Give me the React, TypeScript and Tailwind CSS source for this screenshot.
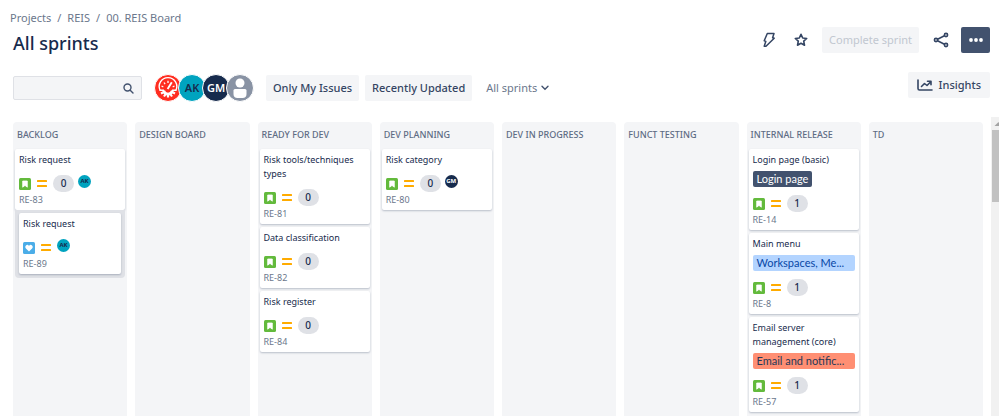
import { useState } from 'react';
import type { ReactNode } from 'react';

type Issue = {
  id: string;
  title: string;
  type: 'story' | 'wish';
  points?: number;
  assignee?: string;
  epic?: { name: string; color: string };
  nested?: boolean;
};

const NAVY = 'bg-[#42526e] text-white';
const BLUE = 'bg-[#b3d4ff] text-[#0747a6]';
const CORAL = 'bg-[#ff8f73] text-[#253858]';

const AVATAR: Record<string, string> = {
  AK: 'bg-[#00a3bf] text-[#172b4d]',
  GM: 'bg-[#172b4d] text-white',
};

const COLUMNS: { name: string; issues: Issue[] }[] = [
  {
    name: 'BACKLOG',
    issues: [
      { id: 'RE-83', title: 'Risk request', type: 'story', points: 0, assignee: 'AK' },
      { id: 'RE-89', title: 'Risk request', type: 'wish', assignee: 'AK', nested: true },
    ],
  },
  { name: 'DESIGN BOARD', issues: [] },
  {
    name: 'READY FOR DEV',
    issues: [
      { id: 'RE-81', title: 'Risk tools/techniques types', type: 'story', points: 0 },
      { id: 'RE-82', title: 'Data classification', type: 'story', points: 0 },
      { id: 'RE-84', title: 'Risk register', type: 'story', points: 0 },
    ],
  },
  { name: 'DEV PLANNING', issues: [{ id: 'RE-80', title: 'Risk category', type: 'story', points: 0, assignee: 'GM' }] },
  { name: 'DEV IN PROGRESS', issues: [] },
  { name: 'FUNCT TESTING', issues: [] },
  {
    name: 'INTERNAL RELEASE',
    issues: [
      { id: 'RE-14', title: 'Login page (basic)', type: 'story', points: 1, epic: { name: 'Login page', color: NAVY } },
      { id: 'RE-8', title: 'Main menu', type: 'story', points: 1, epic: { name: 'Workspaces, Me...', color: BLUE } },
      {
        id: 'RE-57',
        title: 'Email server management (core)',
        type: 'story',
        points: 1,
        epic: { name: 'Email and notific...', color: CORAL },
      },
    ],
  },
  { name: 'TD', issues: [] },
];

function TypeIcon({ type }: { type: Issue['type'] }) {
  return (
    <svg viewBox="0 0 12 12" className="size-3 shrink-0">
      <rect width="12" height="12" rx="1.5" fill={type === 'story' ? '#63ba3c' : '#4bade8'} />
      {type === 'story' ? (
        <path d="M3.7 3h4.6v6.200L6 7.400 3.700 9.200z" fill="#fff" stroke="#fff" strokeWidth="0.8" strokeLinejoin="round" />
      ) : (
        <path d="M6 9.600 2.900 6.500a2 2 0 0 1 0-2.900 2 2 0 0 1 3.100.4 2 2 0 0 1 3.100-.4 2 2 0 0 1 0 2.900z" fill="#fff" />
      )}
    </svg>
  );
}

function PriorityIcon() {
  return (
    <svg viewBox="0 0 10 12" className="mx-[2px] h-3 w-[10px] shrink-0" fill="#ffab00">
      <rect y="2" width="10" height="2" rx="0.5" />
      <rect y="7" width="10" height="2" rx="0.5" />
    </svg>
  );
}

function Card({ issue }: { issue: Issue }) {
  return (
    <article className="rounded-xs bg-white px-1 pt-1 pb-[3px] shadow-[0_1px_2px_rgba(9,30,66,0.25)]">
      <h3 className="text-[9px] leading-[14px] text-[#172b4d]">{issue.title}</h3>
      {issue.epic && (
        <div className="mt-1 flex">
          <span
            className={`rounded-xs px-1 font-['Lato','Noto_Sans',sans-serif] text-[11px] leading-4 whitespace-nowrap ${
              issue.epic.name.endsWith('...') ? 'w-full' : ''
            } ${issue.epic.color}`}
          >
            {issue.epic.name}
          </span>
        </div>
      )}
      <div className="mt-2 flex h-[17px] items-center gap-1">
        <TypeIcon type={issue.type} />
        <PriorityIcon />
        {issue.points !== undefined && (
          <span className="w-[21px] rounded-full bg-[#dfe1e6] text-center text-[10px] leading-[17px] font-medium text-[#172b4d]">
            {issue.points}
          </span>
        )}
        {issue.assignee && (
          <span
            className={`mb-1 size-[13px] rounded-full text-center text-[6px] leading-[13px] font-bold ${AVATAR[issue.assignee]}`}
          >
            {issue.assignee}
          </span>
        )}
      </div>
      <a href="#" className="mt-px block text-[9px] leading-[14px] text-[#6b778c]">
        {issue.id}
      </a>
    </article>
  );
}

function Column({ name, issues }: { name: string; issues: Issue[] }) {
  return (
    <section className="min-w-0 rounded-t-sm bg-[#f4f5f7] px-[2px]">
      <h2 className="px-[2px] pt-[6px] pb-[7px] text-[9px] leading-[14px] font-medium whitespace-nowrap text-[#5e6c84]">{name}</h2>
      <div className="flex flex-col gap-[3px]">
        {issues.map((issue) =>
          issue.nested ? (
            <div key={issue.id} className="-mt-[3px] rounded-b-sm bg-[#dfe1e6] px-1 pt-[3px] pb-1">
              <Card issue={issue} />
            </div>
          ) : (
            <Card key={issue.id} issue={issue} />
          ),
        )}
      </div>
    </section>
  );
}

function Avatar({ className, children }: { className: string; children: ReactNode }) {
  return (
    <span
      className={`-mr-1 flex size-7 items-center justify-center overflow-hidden rounded-full border border-white text-[11px] font-semibold ${className}`}
    >
      {children}
    </span>
  );
}

function GaugeIcon() {
  return (
    <svg viewBox="0 0 26 26" className="size-[26px] shrink-0" fill="none" stroke="#fff">
      <path d="M5.200 15.500a8.800 8.800 0 1 1 15.600 0" strokeWidth="1.400" />
      <path d="M4.500 15.300h4.500M17 15.300h4.500" strokeWidth="1.400" />
      <path d="M6.500 11l1.800.8M9 7.500l1.100 1.600M13 5.800v2.200M19.500 11l-1.800.8" strokeWidth="1.300" />
      <path d="M12.600 14 16.800 7.200" strokeWidth="1.900" />
      <path d="M8.600 15.600a4.500 4.500 0 0 0 8.800 0" strokeWidth="2.800" />
      <path d="M8 17.500l-2 1M18 17.500l2 1M10.300 19.500l-1.300 2M15.700 19.500l1.300 2M13 20v2.500" strokeWidth="2.200" />
    </svg>
  );
}

export default function App() {
  const [query, setQuery] = useState('');

  return (
    <div className="flex h-screen flex-col overflow-hidden bg-white font-['Noto_Sans','Open_Sans',sans-serif] text-[#172b4d]">
      <header className="flex justify-between pr-[9px] pl-[13px]">
        <div>
          <nav className="-ml-[3px] flex gap-[6px] pt-[10px] text-[11px] leading-4 text-[#6b778c]">
            <a href="#">Projects</a>
            <span>/</span>
            <a href="#">REIS</a>
            <span>/</span>
            <a href="#">00. REIS Board</a>
          </nav>
          <h1 className="mt-[5px] text-[18px] leading-6 font-medium">All sprints</h1>
        </div>
        <div className="mt-[27px] flex h-[26px] items-center text-[#344563]">
          <button aria-label="Automation" className="mr-[18px]">
            <svg viewBox="0 0 14 16" className="h-4 w-[14px]" fill="none" stroke="currentColor" strokeWidth="1.500" strokeLinejoin="round">
              <path d="M5.300 1.500h6.700l-1.400 4.200 1.600.6L4 14.300H2.200l1.600-4.900-1.600-.7z" />
            </svg>
          </button>
          <button aria-label="Star" className="mr-[14px]">
            <svg viewBox="0 0 14 14" className="size-[14px]" fill="none" stroke="currentColor" strokeWidth="1.600" strokeLinejoin="round">
              <path d="M7 1.300l1.700 3.700 4 .5-3 2.700.8 4L7 10.200l-3.500 2 .8-4-3-2.700 4-.5z" />
            </svg>
          </button>
          <button disabled className="mr-[14px] h-[26px] rounded-xs bg-[#f4f5f7] px-[7px] text-[11px] text-[#c1c7d0]">
            Complete sprint
          </button>
          <button aria-label="Share" className="mr-3">
            <svg viewBox="0 0 16 16" className="size-4" fill="none" stroke="currentColor" strokeWidth="1.600">
              <circle cx="3" cy="8" r="1.600" />
              <circle cx="13" cy="3" r="1.600" />
              <circle cx="13" cy="13" r="1.600" />
              <path d="M4.600 7.200l6.800-3.400M4.600 8.800l6.800 3.400" />
            </svg>
          </button>
          <button aria-label="More" className="flex h-[26px] w-[29px] items-center justify-center rounded-xs bg-[#42526e]">
            <svg viewBox="0 0 14 4" className="h-1 w-[14px]" fill="#fff">
              <circle cx="2" cy="2" r="1.900" />
              <circle cx="7" cy="2" r="1.900" />
              <circle cx="12" cy="2" r="1.900" />
            </svg>
          </button>
        </div>
      </header>

      <div className="mt-[17px] flex items-start pr-[9px] pl-[13px]">
        <div className="mt-[3px] flex h-[26px] items-center">
          <label className="flex h-6 w-[129px] items-center rounded-xs border border-[#dfe1e6] bg-[#f4f5f7] pr-[7px]">
            <input
              aria-label="Search this board"
              value={query}
              onChange={(e) => setQuery(e.target.value)}
              className="min-w-0 flex-1 bg-transparent px-2 text-[11px] outline-none"
            />
            <svg viewBox="0 0 11 11" className="size-[11px]" fill="none" stroke="#42526e" strokeWidth="1.400" strokeLinecap="round">
              <circle cx="4.500" cy="4.500" r="3.500" />
              <path d="M7.200 7.200 10 10" />
            </svg>
          </label>
          <div className="ml-3 flex">
            <Avatar className="bg-[#ff2d20]">
              <GaugeIcon />
            </Avatar>
            <Avatar className={AVATAR.AK}>AK</Avatar>
            <Avatar className={AVATAR.GM}>GM</Avatar>
            <Avatar className="bg-[#8993a4]">
              <svg viewBox="0 0 26 26" className="size-[26px] shrink-0" fill="#fff">
                <circle cx="13" cy="8" r="4.500" />
                <path d="M6.500 15.500a1.500 1.500 0 0 1 1.500-1.500h10a1.500 1.500 0 0 1 1.500 1.500v3.500a4 4 0 0 1-4 4h-5a4 4 0 0 1-4-4z" />
              </svg>
            </Avatar>
          </div>
          <button className="ml-4 h-[26px] rounded-xs bg-[#f4f5f7] px-[7px] text-[11px] font-medium text-[#344563]">
            Only My Issues
          </button>
          <button className="ml-[6px] h-[26px] rounded-xs bg-[#f4f5f7] px-[7px] text-[11px] font-medium text-[#344563]">
            Recently Updated
          </button>
          <button className="ml-[14px] flex items-center gap-1 text-[11px] text-[#6b778c]">
            All sprints
            <svg viewBox="0 0 8 6" className="h-[6px] w-2" fill="none" stroke="#42526e" strokeWidth="1.400" strokeLinecap="round">
              <path d="M1 1.200l3 3 3-3" />
            </svg>
          </button>
        </div>
        <button className="ml-auto flex h-[26px] items-center gap-[6px] rounded-xs bg-[#f4f5f7] px-[9px] text-[11px] font-medium text-[#344563]">
          <svg viewBox="0 0 16 12" className="h-3 w-4" fill="none" stroke="currentColor" strokeWidth="1.600" strokeLinecap="round" strokeLinejoin="round">
            <path d="M1 1v8.500a1.500 1.500 0 0 0 1.500 1.500H15" />
            <path d="M4.500 7.500 7.500 4.500l2.500 2 4-4M10.500 2.200h3.500v3.500" />
          </svg>
          Insights
        </button>
      </div>

      <main className="mt-4 flex min-h-0 flex-1 gap-2 overflow-hidden pl-[13px]">
        <div className="mt-[5px] grid min-w-0 flex-1 grid-cols-8 gap-2">
          {COLUMNS.map((column) => (
            <Column key={column.name} {...column} />
          ))}
        </div>
        <div className="w-2 bg-[#f1f1f1] pl-px">
          <svg viewBox="0 0 7 13" className="h-[13px] w-[7px]" fill="#a3a3a3">
            <path d="M2.500 9 6.500 5l4 4z" />
          </svg>
          <div className="h-[72px] bg-[#c1c1c1]" />
        </div>
      </main>
    </div>
  );
}
